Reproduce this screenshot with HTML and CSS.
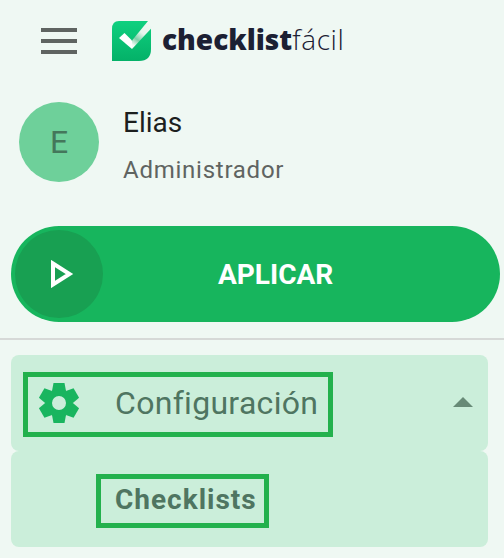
FILE: index.html
```html
<!doctype html>
<html lang="es">
<head>
	<meta charset="utf-8" />
	<title>checklistfácil</title>
	<link rel="stylesheet" href="styles.css">
</head>
<body>
	<div class="top">
		<div class="burger"><span></span><span></span><span></span></div>
		<svg class="logo-icon" viewBox="0 0 42 40" width="42" height="40">
			<defs>
				<linearGradient id="lg" x1="0" y1="0" x2="0" y2="1">
					<stop offset="0" stop-color="#0fd07f" />
					<stop offset="1" stop-color="#04b168" />
				</linearGradient>
				<linearGradient id="tick" gradientUnits="userSpaceOnUse" x1="38" y1="2" x2="22" y2="24">
					<stop offset="0" stop-color="#eff8f3" />
					<stop offset="0.45" stop-color="#e6f5ec" />
					<stop offset="0.75" stop-color="#7ed0a8" />
					<stop offset="1" stop-color="#f4fbf7" />
				</linearGradient>
			</defs>
			<path d="M8 0H40V28Q40 40 28 40H1V8Q1 0 8 0Z" fill="url(#lg)" />
			<path d="M8 17L13.500 12L21 19.500L21 28Z" fill="#fff" />
			<path d="M21 19.500L37 0H42V5.500L21 28Z" fill="url(#tick)" />
		</svg>
		<div class="logo-text"><b>checklist</b><span>fácil</span></div>
	</div>

	<div class="user">
		<div class="avatar">E</div>
		<div class="user-info">
			<div class="user-name">Elias</div>
			<div class="user-role">Administrador</div>
		</div>
	</div>

	<div class="apply">
		<div class="apply-circle">
			<svg viewBox="0 0 24 28" width="24" height="28">
				<path d="M3 3.500L19.500 14L3 24.500Z" fill="none" stroke="#fff" stroke-width="4" />
			</svg>
		</div>
		<div class="apply-label">APLICAR</div>
	</div>

	<div class="divider"></div>

	<div class="menu">
		<div class="menu-head">
			<div class="marked head-mark">
				<svg class="gear" viewBox="-22 -22 44 44" width="44" height="44">
					<g fill="#19b55f">
						<path d="M-7 -12L-5.500 -20H5.500L7 -12Z" />
						<path d="M-7 -12L-5.500 -20H5.500L7 -12Z" transform="rotate(60)" />
						<path d="M-7 -12L-5.500 -20H5.500L7 -12Z" transform="rotate(120)" />
						<path d="M-7 -12L-5.500 -20H5.500L7 -12Z" transform="rotate(180)" />
						<path d="M-7 -12L-5.500 -20H5.500L7 -12Z" transform="rotate(240)" />
						<path d="M-7 -12L-5.500 -20H5.500L7 -12Z" transform="rotate(300)" />
					</g>
					<circle r="10.500" fill="none" stroke="#19b55f" stroke-width="7" />
				</svg>
				<span class="head-text">Configuración</span>
			</div>
			<div class="caret"></div>
		</div>
		<div class="menu-sub">
			<div class="marked sub-mark">Checklists</div>
		</div>
	</div>
</body>
</html>
```

FILE: styles.css
```css
* {
	margin: 0;
	padding: 0;
	box-sizing: border-box;
}
body {
	width: 504px;
	height: 558px;
	overflow: hidden;
	background-color: #eff8f3;
	font-family: Roboto, "Liberation Sans", sans-serif;
}
/* top bar */
.top {
	height: 82px;
	padding: 21px 0 0 41px;
	display: flex;
	align-items: flex-start;
}
.burger {
	width: 36px;
	margin-top: 7px;
	display: flex;
	flex-direction: column;
	gap: 7px;
}
.burger span {
	height: 4px;
	background-color: #5f6461;
}
.logo-icon {
	margin-left: 34px;
}
.logo-text {
	margin: 1px 0 0 9px;
	font-family: "Open Sans", sans-serif;
	font-size: 28px;
	line-height: 34px;
	color: #1c2033;
}
.logo-text b {
	font-weight: 800;
}
.logo-text span {
	font-weight: 300;
	letter-spacing: 0.6px;
}
/* user */
.user {
	height: 80px;
	margin: 20px 0 0 19px;
	display: flex;
}
.avatar {
	width: 80px;
	height: 80px;
	border-radius: 50%;
	background-color: #6ed09a;
	color: #44775b;
	font-size: 32px;
	display: flex;
	align-items: center;
	justify-content: center;
}
.user-info {
	margin-left: 24px;
}
.user-name {
	font-size: 28px;
	line-height: 42px;
	color: #1c1f1e;
}
.user-role {
	margin-top: 11px;
	font-size: 24px;
	line-height: 30px;
	letter-spacing: 0.75px;
	color: #5f6461;
}
/* apply button */
.apply {
	width: 489px;
	height: 96px;
	margin: 44px 0 0 11px;
	padding: 4px;
	border-radius: 48px;
	background-color: #17b55d;
	display: flex;
	align-items: center;
}
.apply-circle {
	width: 88px;
	height: 88px;
	border-radius: 50%;
	background-color: #18a052;
	display: flex;
	align-items: center;
	justify-content: center;
}
.apply-circle svg {
	margin-left: 6px;
}
.apply-label {
	margin-left: 115px;
	font-size: 28px;
	font-weight: 700;
	color: #fff;
}
.divider {
	height: 2px;
	margin-top: 16px;
	background-color: #d6d9d7;
}
/* menu */
.menu {
	width: 477px;
	margin: 15px 0 0 11px;
}
.menu-head,
.menu-sub {
	height: 96px;
	background-color: #cbeeda;
	border-radius: 8px;
	display: flex;
}
.menu-head {
	padding: 17px 15px 0 12px;
	justify-content: space-between;
}
.marked {
	border: 5px solid #23b14d;
}
.head-mark {
	width: 310px;
	height: 65px;
	padding-left: 9px;
	padding-bottom: 4px;
	display: flex;
	align-items: center;
}
.gear {
	flex: none;
}
.head-text {
	margin-left: 34px;
	font-size: 32px;
	letter-spacing: 0.3px;
	color: #4f7561;
}
.caret {
	width: 0;
	height: 0;
	margin-top: 25px;
	border-left: 10px solid transparent;
	border-right: 10px solid transparent;
	border-bottom: 10px solid #688a77;
}
.sub-mark {
	width: 173px;
	height: 54px;
	margin: 23px 0 0 85px;
	padding-left: 14px;
	font-size: 28px;
	font-weight: 700;
	line-height: 42px;
	letter-spacing: 1px;
	color: #4f7561;
}
```
